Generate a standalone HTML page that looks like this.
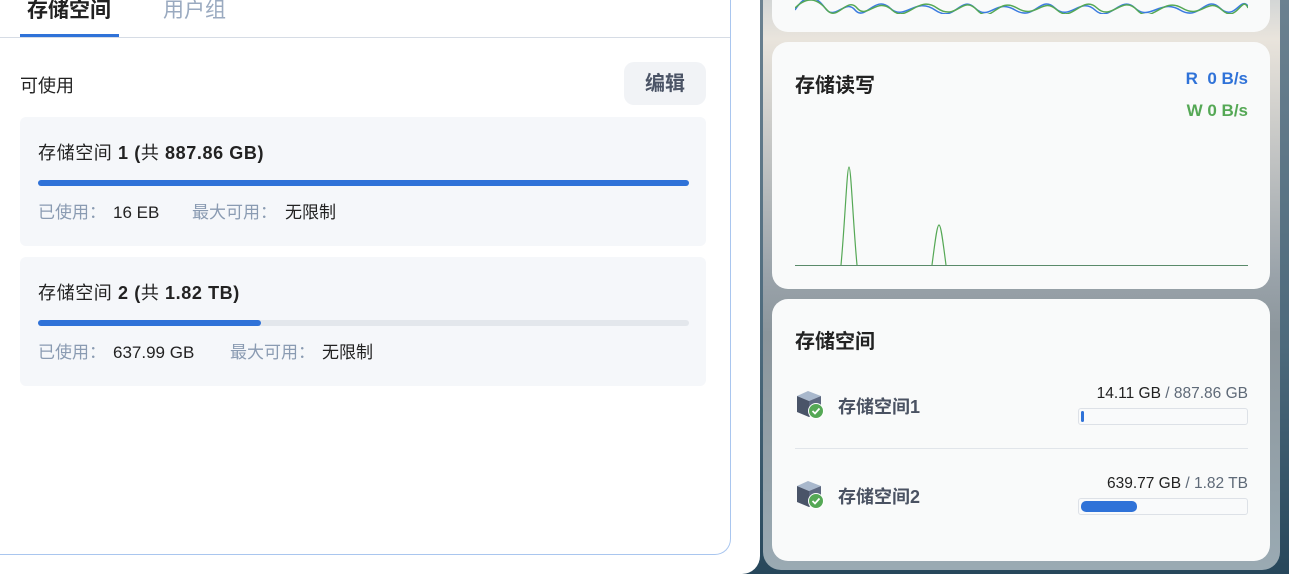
<!DOCTYPE html>
<html><head><meta charset="utf-8"><style>
*{margin:0;padding:0;box-sizing:border-box}
body{width:1289px;height:574px;overflow:hidden;position:relative;font-family:"Liberation Sans","Noto Sans CJK SC",sans-serif;background:linear-gradient(90deg,#3a5a6e 0%,#5b7a88 40%,#2f4f62 100%)}
.bg{position:absolute;left:740px;top:0;width:549px;height:574px;background:linear-gradient(180deg,#6b8190,#4d6a7c 60%,#27475b)}
.wrap{position:absolute;left:0;top:0;width:760px;height:574px;background:#fff;border-bottom-right-radius:18px}
.panel{position:absolute;left:0;top:-20px;width:731px;height:575px;border:1px solid #a9c6ef;border-left:none;border-top:none;border-bottom-right-radius:16px;background:#fff}
.tabs{position:absolute;left:0;top:0;width:730px;height:38px;border-bottom:1px solid #d6dce5}
.tab{position:absolute;top:-6px;font-size:21px;font-weight:bold}
.uline{position:absolute;left:20px;top:34px;width:99px;height:3px;background:#2f72d8}
.lbl{position:absolute;left:20px;top:72px;font-size:18px;color:#222}
.btn{position:absolute;left:624px;top:62px;width:82px;height:43px;background:#f1f3f6;border-radius:10px;font-size:20px;font-weight:bold;color:#4b5466;text-align:center;line-height:45px}
.card{position:absolute;left:20px;width:686px;height:129px;background:#f5f7fa;border-radius:6px}
.card .t{position:absolute;left:18px;top:23px;font-size:18px;color:#222;letter-spacing:0.6px;white-space:nowrap;line-height:26px}
.card .t b{font-weight:bold}
.bar{position:absolute;left:18px;top:63px;width:651px;height:6px;border-radius:3px;background:#e3e7ec}
.bar i{display:block;height:6px;border-radius:3px;background:#2f72d8}
.card .u,.card .v{position:absolute;top:84px;font-size:17px;white-space:nowrap;line-height:24px;height:24px}
.card .u{color:#8a9bb2}
.card .v{color:#222}
.gp{position:absolute;left:763px;top:-20px;width:517px;height:590px;border-radius:18px;background:linear-gradient(180deg,#c8cfd3 0%,#e9e4dc 10%,#9aa3aa 50%,#8c969c 60%,#9aaab3 100%)}
.c{position:absolute;left:772px;width:498px;background:#f9fafa;border-radius:16px}
.h{position:absolute;left:23px;font-size:20px;font-weight:bold;color:#222}
.row{position:absolute;left:23px;width:453px}
.nm{position:absolute;left:43px;font-size:18px;font-weight:bold;color:#4a5262}
.sz{position:absolute;right:0;font-size:15.5px;color:#222;white-space:nowrap}
.sz span{color:#5f6a78}
.pb{position:absolute;right:0;width:170px;height:17px;border:1px solid #dde1e7;border-radius:3px;background:#f9fafb}
.pb i{position:absolute;left:2px;top:2px;height:11px;border-radius:5px;background:#2f72d8}
</style></head><body>
<div class="bg"></div>
<div class="wrap"></div>
<div class="panel"></div>
<div class="tabs">
<div class="tab" style="left:27px;color:#222">存储空间</div>
<div class="tab" style="left:163px;color:#9aaac0;font-weight:normal">用户组</div>
<div class="uline"></div>
</div>
<div class="lbl">可使用</div>
<div class="btn">编辑</div>
<div class="card" style="top:117px"><div class="t">存储空间 <b>1 (</b>共 <b>887.86 GB)</b></div><div class="bar"><i style="width:651px"></i></div><div class="u" style="left:18px">已使用：</div><div class="v" style="left:93px">16 EB</div><div class="u" style="left:172px">最大可用：</div><div class="v" style="left:265px">无限制</div></div>
<div class="card" style="top:257px"><div class="t">存储空间 <b>2 (</b>共 <b>1.82 TB)</b></div><div class="bar"><i style="width:223px"></i></div><div class="u" style="left:18px">已使用：</div><div class="v" style="left:93px">637.99 GB</div><div class="u" style="left:210px">最大可用：</div><div class="v" style="left:302px">无限制</div></div>

<div class="gp"></div>
<div class="c" style="top:-20px;height:52px">
<svg style="position:absolute;left:23px;top:14px" width="453" height="20"><path d="M0 16 C10 0 20 0 30 14 S50 4 60 16 S80 0 95 14 S120 2 140 16 S165 0 180 14 S200 4 220 16 S245 0 260 14 S285 2 300 16 S325 0 340 14 S365 4 385 16 S410 0 425 14 S445 2 453 12" fill="none" stroke="#3b7be0" stroke-width="1.5"/><path d="M0 14 C12 2 22 4 32 16 S52 2 62 14 S82 2 97 16 S122 0 142 14 S167 0 182 16 S202 2 222 14 S247 2 262 16 S287 0 302 14 S327 0 342 16 S367 2 387 14 S412 2 427 16 S447 0 453 14" fill="none" stroke="#55a855" stroke-width="1.5"/></svg>
</div>
<div class="c" style="top:42px;height:247px">
<div class="h" style="top:27px">存储读写</div>
<div style="position:absolute;right:22px;top:27px;font-size:17px;font-weight:bold;color:#2f72d8">R&nbsp; 0 B/s</div>
<div style="position:absolute;right:22px;top:59px;font-size:17px;font-weight:bold;color:#55a855">W 0 B/s</div>
<svg style="position:absolute;left:23px;top:120px" width="453" height="106"><path d="M46 103 C50 60 52 5 54 5 C56 5 58 60 62 103 M137 103 C140 80 142 63 144 63 C146 63 148 80 151 103" fill="none" stroke="#55a855" stroke-width="1.2"/><line x1="0" y1="103.5" x2="453" y2="103.5" stroke="#5a8a6a" stroke-width="1"/></svg>
</div>
<div class="c" style="top:299px;height:262px">
<div class="h" style="top:26px">存储空间</div>
<div class="row" style="top:86px;height:40px">
<svg style="position:absolute;left:0;top:5px" width="30" height="30" viewBox="0 0 30 30"><path d="M2 6 L13 1 L26 6 L14 11 Z" fill="#a9b8cc"/><path d="M2 6 L14 11 L14 27 L2 22 Z" fill="#4a5468"/><path d="M14 11 L26 6 L26 22 L14 27Z" fill="#5d6880"/><circle cx="21" cy="21" r="7.5" fill="#55a855" stroke="#fff" stroke-width="1"/><path d="M17.5 21 L20 23.5 L24.5 18.5" fill="none" stroke="#fff" stroke-width="1.8"/></svg>
<div class="nm" style="top:8px">存储空间1</div>
<div class="sz" style="top:0px">14.11 GB <span>/ 887.86 GB</span></div>
<div class="pb" style="top:23px"><i style="width:3px"></i></div>
</div>
<div style="position:absolute;left:23px;top:149px;width:453px;height:1px;background:#e1e5ea"></div>
<div class="row" style="top:176px;height:40px">
<svg style="position:absolute;left:0;top:5px" width="30" height="30" viewBox="0 0 30 30"><path d="M2 6 L13 1 L26 6 L14 11 Z" fill="#a9b8cc"/><path d="M2 6 L14 11 L14 27 L2 22 Z" fill="#4a5468"/><path d="M14 11 L26 6 L26 22 L14 27Z" fill="#5d6880"/><circle cx="21" cy="21" r="7.5" fill="#55a855" stroke="#fff" stroke-width="1"/><path d="M17.5 21 L20 23.5 L24.5 18.5" fill="none" stroke="#fff" stroke-width="1.8"/></svg>
<div class="nm" style="top:8px">存储空间2</div>
<div class="sz" style="top:0px">639.77 GB <span>/ 1.82 TB</span></div>
<div class="pb" style="top:23px"><i style="width:56px"></i></div>
</div>
</div>
</body></html>
